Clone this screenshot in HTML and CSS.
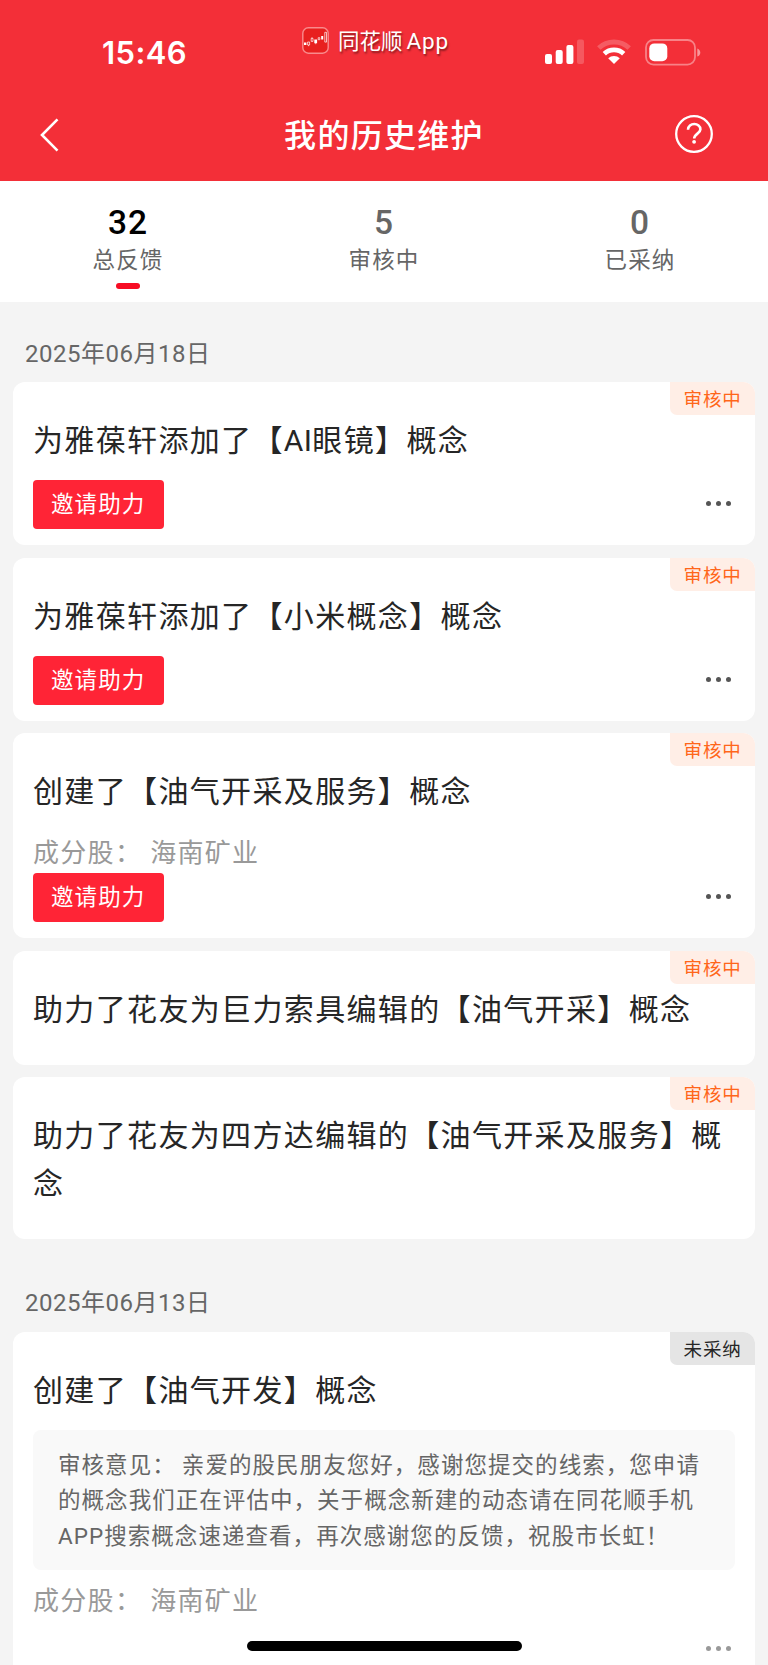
FILE: index.html
```html
<!DOCTYPE html>
<html lang="zh-CN">
<head>
    <meta charset="UTF-8">
    <meta name="viewport" content="width=device-width, initial-scale=1.0">
    <title>我的历史维护</title>
    <link rel="stylesheet" href="styles.css">
</head>
<body>
    <header class="header">
        <div class="status-bar">
            <div class="time">15:46</div>
            <div class="source-app">
                <svg width="27" height="27" viewBox="0 0 27 27" fill="none">
                    <rect x="0.8" y="0.8" width="25.4" height="25.4" rx="5.5" fill="#e8201f" stroke="#f98a8c" stroke-width="1.4"/>
                    <path d="M2 15.5h2.4v2.4H2zM12.3 12.6h2.8v3.6h-2.8zM19.2 9h2v3.6h-2z" fill="#fff"/>
                    <path d="M5.6 15h2v3h-2zM9.2 11.4h1.8v3H9.2zM16.2 10.7h1.6v2h-1.6zM22.8 5.3h1.7v9.8h-1.7zM10 10.3v1M13.7 16.2v1M6.6 18v1.2" stroke="#fff" stroke-width="0.7"/>
                </svg>
                <div>同花顺<span class="latin">App</span></div>
            </div>
            <div class="indicators">
                <svg class="signal" width="39" height="25" viewBox="0 0 39 25" fill="#fff">
                    <rect x="0" y="15" width="7" height="10" rx="2"/>
                    <rect x="10.7" y="11" width="7" height="14" rx="2"/>
                    <rect x="21.4" y="6" width="7" height="19" rx="2"/>
                    <rect x="32" y="0.5" width="7" height="24.5" rx="2" opacity="0.2"/>
                </svg>
                <svg class="wifi" width="34" height="25" viewBox="0 0 34 25" fill="none">
                    <path d="M1.8 9a22 22 0 0 1 30.4 0" stroke="#fff" stroke-opacity="0.22" stroke-width="5"/>
                    <path d="M7.3 14.8a14.2 14.2 0 0 1 19.4 0" stroke="#fff" stroke-width="4.8"/>
                    <path d="M11.2 19.3a8.5 8.5 0 0 1 11.6 0L17 25z" fill="#fff"/>
                </svg>
                <svg class="battery" width="57" height="27" viewBox="0 0 57 27" fill="none">
                    <rect x="1" y="1" width="49" height="24.6" rx="7.5" stroke="#fff" stroke-opacity="0.4" stroke-width="1.8"/>
                    <rect x="4.3" y="4.4" width="18" height="17.8" rx="5" fill="#fff"/>
                    <path d="M52.3 9.4c4 1.6 4 6.6 0 8.2z" fill="#fff" fill-opacity="0.5"/>
                </svg>
            </div>
        </div>
        <div class="nav-bar">
            <svg class="back" width="20" height="34" viewBox="0 0 20 34" fill="none" stroke="#fff" stroke-width="2.6">
                <path d="M17.5 1.4L2 17l15.5 15.6"/>
            </svg>
            <h1>我的历史维护</h1>
            <svg class="help" width="38" height="38" viewBox="0 0 38 38" fill="none" stroke="#fff">
                <circle cx="19" cy="19" r="17.8" stroke-width="2.3"/>
                <path d="M13 14.8c0-7.8 12.6-7.4 12.4-.4-.1 4.2-6.2 4.4-6.2 9.2" stroke-width="2.6"/>
                <circle cx="19.1" cy="26.8" r="1.9" fill="#fff" stroke="none"/>
            </svg>
        </div>
    </header>

    <nav class="tabs">
        <div class="tab active">
            <div class="count">32</div>
            <div class="label">总反馈</div>
        </div>
        <div class="tab">
            <div class="count">5</div>
            <div class="label">审核中</div>
        </div>
        <div class="tab">
            <div class="count">0</div>
            <div class="label">已采纳</div>
        </div>
    </nav>

    <main class="list">
        <div class="date">2025年06月18日</div>

        <div class="card">
            <div class="badge">审核中</div>
            <div class="title">为雅葆轩添加了【<span class="latin">AI</span>眼镜】概念</div>
            <div class="actions">
                <button class="invite">邀请助力</button>
                <div class="more"><i></i><i></i><i></i></div>
            </div>
        </div>

        <div class="card">
            <div class="badge">审核中</div>
            <div class="title">为雅葆轩添加了【小米概念】概念</div>
            <div class="actions">
                <button class="invite">邀请助力</button>
                <div class="more"><i></i><i></i><i></i></div>
            </div>
        </div>

        <div class="card">
            <div class="badge">审核中</div>
            <div class="title">创建了【油气开采及服务】概念</div>
            <div class="stocks"><span>成分股：</span><span>海南矿业</span></div>
            <div class="actions">
                <button class="invite">邀请助力</button>
                <div class="more"><i></i><i></i><i></i></div>
            </div>
        </div>

        <div class="card">
            <div class="badge">审核中</div>
            <div class="title">助力了花友为巨力索具编辑的【油气开采】概念</div>
        </div>

        <div class="card">
            <div class="badge">审核中</div>
            <div class="title">助力了花友为四方达编辑的【油气开采及服务】概念</div>
        </div>

        <div class="date second">2025年06月13日</div>

        <div class="card">
            <div class="badge rejected">未采纳</div>
            <div class="title">创建了【油气开发】概念</div>
            <div class="opinion">审核意见： 亲爱的股民朋友您好，感谢您提交的线索，您申请<br>的概念我们正在评估中，关于概念新建的动态请在同花顺手机<br><span class="latin">APP</span>搜索概念速递查看，再次感谢您的反馈，祝股市长虹！</div>
            <div class="stocks"><span>成分股：</span><span>海南矿业</span></div>
            <div class="actions light">
                <div class="more"><i></i><i></i><i></i></div>
            </div>
        </div>
    </main>

    <div class="home-indicator"></div>
</body>
</html>
```
FILE: styles.css
```css
* { box-sizing: border-box; }
body { position: relative; margin: 0; width: 768px; height: 1665px; overflow: hidden; background: #f4f4f4; color: #262626; font-family: "Noto Sans CJK SC", sans-serif; }
.latin { font-family: Roboto, sans-serif; line-height: 1; }

/* header */
.header { height: 180.5px; background: #f32f38; color: #fff; }
.status-bar { display: flex; height: 90px; padding-left: 102px; }
.time { width: 200px; padding-top: 33px; font: 600 31px/40px Inter, sans-serif; letter-spacing: 0.4px; }
.source-app { display: flex; align-items: center; gap: 9px; width: 243px; height: 27px; margin-top: 27px; font-size: 21.5px; line-height: 27px; white-space: nowrap; text-shadow: 1px 2px 2px rgba(0,0,0,0.45); }
.source-app div { margin-top: -3px; }
.source-app .latin { margin-left: 4px; font-size: 22.5px; letter-spacing: 0.8px; }
.indicators { display: flex; padding-top: 39px; }
.wifi { margin-left: 13px; }
.battery { margin-left: 14px; }
.nav-bar { display: flex; align-items: center; justify-content: space-between; height: 90px; padding: 0 55px 0 40px; }
.nav-bar h1 { margin: -4px 0 0 33px; font-size: 32px; line-height: 48px; font-weight: 500; letter-spacing: 1.3px; }
.help { margin-top: -3px; }

/* tabs */
.tabs { display: flex; height: 121px; background: #fff; color: #666; }
.tab { flex: 1; padding-top: 22px; text-align: center; }
.count { font: 500 33.5px/40px Roboto, sans-serif; letter-spacing: 1px; }
.label { margin-top: -2px; font-size: 22.5px; line-height: 34px; letter-spacing: 1.1px; }
.active .count { color: #000; }
.active::after { content: ""; display: block; width: 24px; height: 6px; margin: 8.5px auto 0; border-radius: 3px; background: #f70d24; }

/* list */
.list { padding: 0 13px; }
.date { height: 80.5px; padding: 34px 0 0 12px; color: #666; font: 24px/36px Roboto, "Noto Sans CJK SC", sans-serif; letter-spacing: 0.5px; }
.date.second { height: 93px; padding-top: 46px; }
.card { position: relative; margin-bottom: 12.5px; padding: 32px 20px 16px; border-radius: 12px; background: #fff; }
.card:nth-last-child(3) { margin-bottom: 0; }
.title { margin-bottom: 18px; font-size: 30px; line-height: 48px; letter-spacing: 1.35px; }
.title .latin { letter-spacing: 0.4px; }
.badge { position: absolute; top: 0; right: 0; width: 85.5px; height: 33px; padding-left: 14px; border-radius: 0 12px 0 7px; background: #ffeee6; color: #ff661a; font-size: 18.5px; line-height: 33px; letter-spacing: 0.9px; }
.badge.rejected { background: #e5e5e5; color: #262626; }
.stocks { display: flex; gap: 8px; margin-top: -1px; padding-bottom: 1px; color: #999; font-size: 26px; line-height: 42px; letter-spacing: 1.3px; }
.actions { display: flex; align-items: center; justify-content: space-between; height: 49px; }
.invite { width: 131px; height: 49px; padding: 0 0 4px 18px; border: 0; border-radius: 4px; background: #ff2436; color: #fff; font: 22.5px/45px "Noto Sans CJK SC", sans-serif; letter-spacing: 1.1px; text-align: left; }
.more { display: flex; gap: 5px; margin: -2px 4.5px 0 auto; color: #555; }
.more i { width: 5px; height: 5px; border-radius: 50%; background: currentColor; }
.light { margin-top: 4px; }
.light .more { color: #999; }
.opinion { height: 139.7px; margin-bottom: 9px; padding: 15.5px 0 0 25px; border-radius: 8px; background: #f9f9f9; color: #666; font-size: 22.5px; line-height: 35.9px; letter-spacing: 1.05px; white-space: nowrap; }

.home-indicator { position: absolute; left: 246.5px; top: 1641px; width: 275px; height: 9.5px; border-radius: 5px; background: #000; }
```
